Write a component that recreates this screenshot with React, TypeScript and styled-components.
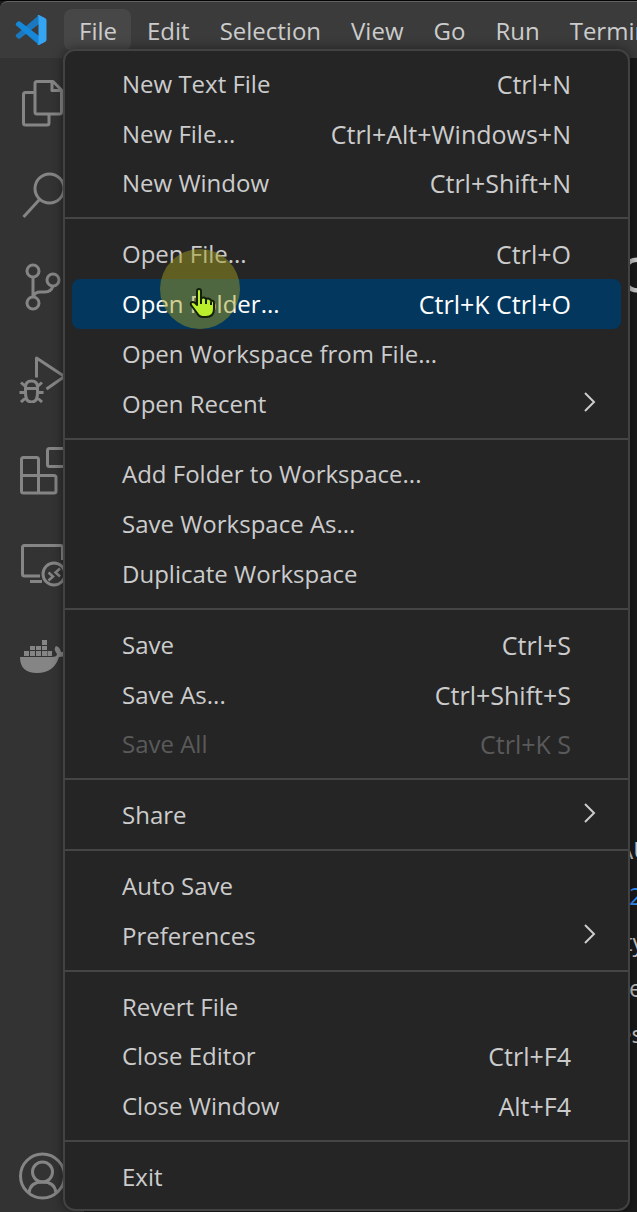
import React from "react";
import styled, { createGlobalStyle } from "styled-components";

const GlobalStyle = createGlobalStyle`
  * { box-sizing: border-box; }
  html, body { margin: 0; height: 100%; }
  body {
    background: #1a1a1a;
    color: #cccccc;
    font: 24px/32px "Segoe UI", "Open Sans", "Noto Sans", sans-serif;
    overflow: hidden;
  }
  #root { height: 100%; }
  button { font: inherit; color: inherit; background: none; border: 0; padding: 0; text-align: left; }
`;

const Window = styled.div`
  position: relative;
  display: flex;
  flex-direction: column;
  min-height: 100vh;
  border-top: 1px solid #050505;
  overflow: hidden;
`;

const TitleBar = styled.header`
  display: flex;
  align-items: flex-start;
  height: 57px;
  padding: 7px 0 0 15px;
  background: #3b3b3b;
  border-top: 1px solid #626262;
  border-top-left-radius: 8px;
`;

const Logo = styled.svg`
  width: 32px;
  height: 32px;
  margin: 5px 17px 0 0;
  flex: none;
`;

const MenuBar = styled.nav`
  display: flex;
  gap: 1px;
`;

const MenuBarButton = styled.button<{ $open?: boolean }>`
  && {
    flex: none;
    height: 42px;
    padding: 1px 14px 0 15px;
    border-radius: 8px;
    background: ${(p) => (p.$open ? "#474747" : "transparent")};
    white-space: nowrap;
  }
`;

const Workbench = styled.div`
  display: flex;
  flex: 1;
`;

const ActivityBar = styled.nav`
  display: flex;
  flex-direction: column;
  flex: none;
  width: 84px;
  padding-bottom: 12px;
  background: #333333;
  color: #858585;
`;

const Activity = styled.button<{ $last?: boolean }>`
  && {
    display: flex;
    align-items: flex-start;
    justify-content: center;
    height: ${(p) => (p.$last ? "48px" : "92px")};
    padding-top: ${(p) => (p.$last ? "0" : "21px")};
    margin-top: ${(p) => (p.$last ? "auto" : "0")};
  }
  svg { width: 48px; height: 48px; display: block; }
`;

const Editor = styled.main`
  flex: 1;
  min-width: 0;
  padding: 180px 0 0 534px;
  white-space: nowrap;
  overflow: hidden;
`;

const Welcome = styled.h1`
  margin: 0 0 529px;
  font-size: 64px;
  line-height: 60px;
  font-weight: 400;
`;

const Note = styled.p<{ $inset?: number }>`
  margin: 0;
  padding-left: ${(p) => p.$inset ?? 0}px;
  line-height: 46px;
  a { color: #3794ff; text-decoration: none; }
`;

const Menu = styled.div`
  position: absolute;
  top: 48px;
  bottom: 1px;
  left: 63px;
  width: calc(100% - 70px);
  max-width: 567px;
  display: flex;
  flex-direction: column;
  padding: 8px 7px 7px;
  background: #252526;
  border: 2px solid #424242;
  border-radius: 12px;
  box-shadow: 0 0 12px rgba(0, 0, 0, 0.45);
`;

const Item = styled.button<{ $active?: boolean }>`
  && {
    display: flex;
    flex: 1;
    align-items: center;
    justify-content: space-between;
    min-height: 40px;
    padding: 0 50px 0 50px;
    border-radius: 8px;
    background: ${(p) => (p.$active ? "#03375e" : "transparent")};
    color: ${(p) => (p.$active ? "#ffffff" : "#cccccc")};
    white-space: nowrap;
  }
  &&:disabled { color: #5a5a5a; }
`;

const Keys = styled.span`
  font-size: 25px;
`;

const Separator = styled.hr`
  width: calc(100% + 14px);
  height: 2px;
  margin: 9px -7px 10px;
  border: 0;
  background: #454545;
  flex: none;
`;

const Chevron = styled.svg`
  width: 14px;
  height: 22px;
  margin: 0 -26px 4px 0;
`;

const Pointer = styled.div`
  position: absolute;
  top: 248px;
  left: 160px;
  width: 80px;
  height: 80px;
  border-radius: 50%;
  background: rgba(164, 157, 32, 0.48);
  pointer-events: none;
  svg { display: block; width: 26px; height: 30px; margin: 39px 0 0 29px; }
`;

type Entry = { label: string; keys?: string; sub?: boolean; active?: boolean; disabled?: boolean };

const groups: Entry[][] = [
  [
    { label: "New Text File", keys: "Ctrl+N" },
    { label: "New File...", keys: "Ctrl+Alt+Windows+N" },
    { label: "New Window", keys: "Ctrl+Shift+N" },
  ],
  [
    { label: "Open File...", keys: "Ctrl+O" },
    { label: "Open Folder...", keys: "Ctrl+K Ctrl+O", active: true },
    { label: "Open Workspace from File..." },
    { label: "Open Recent", sub: true },
  ],
  [
    { label: "Add Folder to Workspace..." },
    { label: "Save Workspace As..." },
    { label: "Duplicate Workspace" },
  ],
  [
    { label: "Save", keys: "Ctrl+S" },
    { label: "Save As...", keys: "Ctrl+Shift+S" },
    { label: "Save All", keys: "Ctrl+K S", disabled: true },
  ],
  [{ label: "Share", sub: true }],
  [{ label: "Auto Save" }, { label: "Preferences", sub: true }],
  [
    { label: "Revert File" },
    { label: "Close Editor", keys: "Ctrl+F4" },
    { label: "Close Window", keys: "Alt+F4" },
  ],
  [{ label: "Exit" }],
];

const line = { fill: "none", stroke: "currentColor", strokeWidth: 3 } as const;

const activities: { name: string; icon: React.ReactNode }[] = [
  {
    name: "Explorer",
    icon: (
      <g {...line} strokeLinejoin="round">
        <path d="M19 2.500H35L43.500 11V33q0 2-2 2H19q-2 0-2-2V4.500q0-2 2-2M34 3v8.500h9" />
        <path d="M17 13.500H7.500q-2 0-2 2V44q0 2 2 2H29q2 0 2-2v-9" />
      </g>
    ),
  },
  {
    name: "Search",
    icon: (
      <g {...line}>
        <circle cx="31.500" cy="17.500" r="14.500" />
        <path d="M21.500 28.500L5.500 46" />
      </g>
    ),
  },
  {
    name: "Source Control",
    icon: (
      <g {...line}>
        <circle cx="15" cy="8" r="6" />
        <circle cx="15" cy="40" r="6" />
        <circle cx="35" cy="17" r="6" />
        <path d="M15 14v20M35 23q-2 6-8 6h-5q-5 0-7 5" />
      </g>
    ),
  },
  {
    name: "Run and Debug",
    icon: (
      <g {...line}>
        <path d="M18.500 22.500V3L46.500 21.500L28.500 34" strokeLinejoin="round" />
        <path d="M7.500 32q0-6 6-6t6 6v6q0 9-6 9t-6-9zM7.500 33.500h12M7.500 31.500L3 27.500M19.500 31.500L24 27.500M7 37.500H1.500M20 37.500h5.500M8.500 42L3 47M18.500 42L24 47" />
      </g>
    ),
  },
  {
    name: "Extensions",
    icon: (
      <g {...line}>
        <path d="M5.500 10.500h13q2 0 2 2v16H36q2 0 2 2V44q0 2-2 2H5.500q-2 0-2-2V12.500q0-2 2-2zM3.500 28.500h17V46" />
        <rect x="29.500" y="1.500" width="18" height="18" rx="2" />
      </g>
    ),
  },
  {
    name: "Remote Explorer",
    icon: (
      <g {...line}>
        <path d="M22 37H6.500q-2 0-2-2V8.500q0-2 2-2H42.500q2 0 2 2V21M12 42.500h12" />
        <circle cx="36" cy="35" r="11" />
        <path d="M30.500 33.500l4.500 4l-4.500 4M42 29.500l-4.500 4l4.500 4" strokeWidth="2.500" />
      </g>
    ),
  },
  {
    name: "Docker",
    icon: (
      <g fill="currentColor">
        <path d="M2 26H34q5 0 5-3q-4-5-1-8q4 1 5 6q4-1 6 1q-2 4-8 4q-5 16-22 16Q2 42 2 26z" />
        <path d="M6 20h5v5H6zM12 20h5v5h-5zM18 20h5v5h-5zM24 20h5v5h-5zM29.500 20h4.500v5h-4.500zM12 15h5v4h-5zM18 15h5v4h-5zM24 15h5v4h-5zM24 9h5v5h-5z" />
      </g>
    ),
  },
];

export default function App() {
  return (
    <>
      <GlobalStyle />
      <Window>
        <TitleBar>
          <Logo viewBox="0 0 32 32" aria-hidden="true">
            <path d="M24 1v9L5 24.500q-1 .7-2 0L1.300 23q-1.300-1.200 0-2.400z" fill="#1c78be" />
            <path d="M24 31v-9L5 7.500q-1-.7-2 0L1.300 9q-1.300 1.200 0 2.400z" fill="#1688da" />
            <path d="M24 1l6 3q1.500.8 1.500 2.300v19.400q0 1.500-1.500 2.300l-6 3q-1 .4-2-.5q1.500.5 1.500-1.500V3q0-2-1.500-1.500q1-.9 2-.5z" fill="#35a4f2" />
          </Logo>
          <MenuBar aria-label="Application menu">
            {["File", "Edit", "Selection", "View", "Go", "Run", "Terminal"].map((m) => (
              <MenuBarButton key={m} $open={m === "File"}>{m}</MenuBarButton>
            ))}
          </MenuBar>
        </TitleBar>
        <Workbench>
          <ActivityBar aria-label="Activity bar">
            {activities.map((a) => (
              <Activity key={a.name} aria-label={a.name}>
                <svg viewBox="0 0 48 48">{a.icon}</svg>
              </Activity>
            ))}
            <Activity $last aria-label="Accounts">
              <svg viewBox="0 0 48 48">
                <g {...line}>
                  <circle cx="24.500" cy="24" r="22" />
                  <circle cx="24.500" cy="20" r="10" />
                  <path d="M11 41q1-11 13.500-11t13.500 11" />
                </g>
              </svg>
            </Activity>
          </ActivityBar>
          <Editor>
            <Welcome>o</Welcome>
            <Note>AU</Note>
            <Note $inset={11}><a href="#release">2</a></Note>
            <Note $inset={6}>ty</Note>
            <Note $inset={11}>e</Note>
            <Note>es</Note>
          </Editor>
        </Workbench>
        <Menu role="menu" aria-label="File">
          {groups.map((group, i) => (
            <React.Fragment key={i}>
              {i > 0 && <Separator />}
              {group.map((e) => (
                <Item key={e.label} role="menuitem" $active={e.active} disabled={e.disabled}>
                  <span>{e.label}</span>
                  {e.keys && <Keys>{e.keys}</Keys>}
                  {e.sub && (
                    <Chevron viewBox="0 0 14 22" aria-hidden="true">
                      <path d="M2 2l9 9l-9 9" fill="none" stroke="#cccccc" strokeWidth="2" />
                    </Chevron>
                  )}
                </Item>
              ))}
            </React.Fragment>
          ))}
        </Menu>
        <Pointer aria-hidden="true">
          <svg viewBox="0 0 26 30">
            <path d="M8 3q0-2 2-2t2 2v8q1-2 3-1.500t2 2q1-1.500 3-.8t2 2.300q3-1 3 2v6q0 8-8 8h-3q-4 0-6-4l-6-8q-1-3 2-3q2 0 4 3z" fill="#b9f02b" stroke="#14200a" strokeWidth="2" strokeLinejoin="round" />
            <path d="M12 11v5M17 12v4M22 14v3" stroke="#14200a" strokeWidth="2" fill="none" />
          </svg>
        </Pointer>
      </Window>
    </>
  );
}
